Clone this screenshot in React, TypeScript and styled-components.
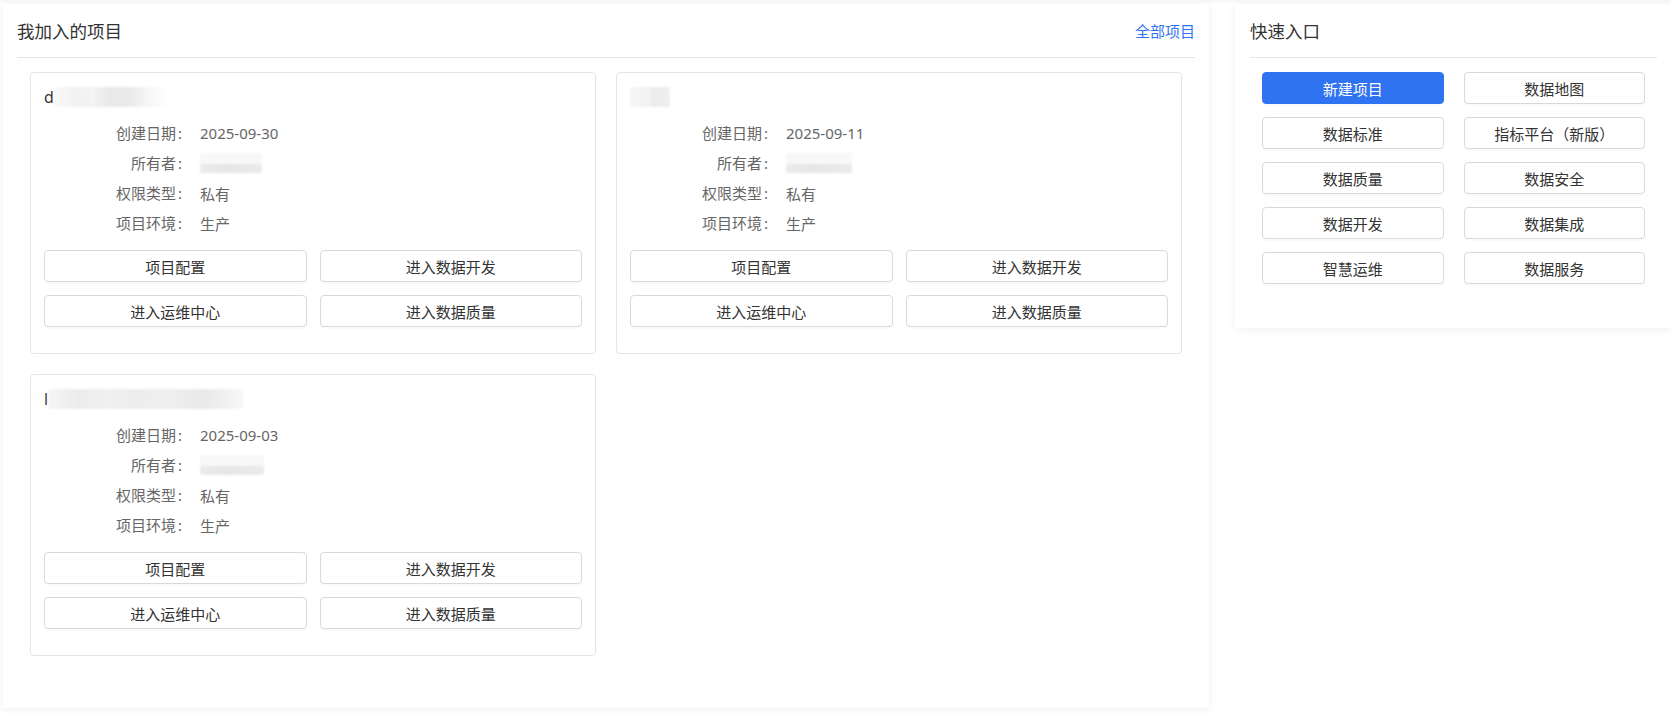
import React from 'react'
import styled, {createGlobalStyle} from 'styled-components'

const GlobalStyle = createGlobalStyle`
  html, body {
    margin: 0;
    padding: 0;
    background: #fff;
  }
  body {
    font-family: "Noto Sans", "Noto Sans CJK SC", sans-serif;
    color: #333;
  }
`

const Page = styled.div`
  display: flex;
  align-items: flex-start;
  gap: 26px;
  padding: 4px 0 0 3px;
  min-height: 716px;
  box-shadow: inset 0 4px 4px -3px rgba(0, 0, 0, 0.06);
`

const Panel = styled.section<{ $w?: number }>`
  background: #fff;
  box-shadow: 0 1px 8px rgba(0, 0, 0, 0.07);
  padding: 0 14px ${p => (p.$w ? '52px' : '44px')} ${p => (p.$w ? '14px' : '15px')};
  ${p => (p.$w ? `width: ${p.$w}px;` : 'flex: 1;')}
  box-sizing: border-box;
`

const Header = styled.div`
  display: flex;
  align-items: center;
  justify-content: space-between;
  height: 53px;
  border-bottom: 1px solid #e6e6e6;
`

const Title = styled.h2`
  margin: 0;
  font-size: 17.5px;
  font-weight: 400;
  color: #333;
`

const MoreLink = styled.a`
  font-size: 15px;
  color: #2f74f0;
  text-decoration: none;
  cursor: pointer;
`

const CardGrid = styled.div`
  display: grid;
  grid-template-columns: 1fr 1fr;
  gap: 20px;
  padding: 14px 13px 0 13px;
  align-items: start;
`

const Card = styled.div`
  border: 1px solid #e5e5e5;
  border-radius: 4px;
  padding: 13px 13px 26px;
`

const Name = styled.div`
  display: flex;
  align-items: center;
  height: 22px;
  font-size: 16px;
  color: #333;
`

const Blur = styled.span<{ $w: number; $h: number; $tones: string }>`
  display: inline-block;
  width: ${p => p.$w}px;
  height: ${p => p.$h}px;
  background: linear-gradient(90deg, ${p => p.$tones});
  filter: blur(1.2px);
`

const OwnerBlur = styled.span<{ $w: number }>`
  display: inline-flex;
  flex-direction: column;
  justify-content: flex-end;
  width: ${p => p.$w}px;
  height: 20px;
  background: #f8f8f8;
  filter: blur(0.8px);

  &::after {
    content: '';
    display: block;
    height: 9px;
    background: linear-gradient(90deg, #ececec, #e6e6e6 40%, #ebebeb);
  }
`

const Info = styled.dl`
  display: grid;
  grid-template-columns: 138px 1fr;
  column-gap: 18px;
  margin: 10px 0 0;
  font-size: 15px;
`

const Label = styled.dt`
  height: 30px;
  line-height: 30px;
  text-align: right;
  color: #666;

  &::after {
    content: ':';
    margin-left: 2px;
  }
`

const Value = styled.dd`
  display: flex;
  align-items: center;
  height: 30px;
  margin: 0;
  color: #666;
`

const ButtonGrid = styled.div<{ $gap: number; $inset?: number }>`
  display: grid;
  grid-template-columns: 1fr 1fr;
  column-gap: ${p => p.$gap}px;
  row-gap: 13px;
  margin: ${p => (p.$inset ? `14px ${p.$inset}px 0` : '12px 0 0')};
`

const Button = styled.button<{ $primary?: boolean }>`
  height: 32px;
  border: 1px solid ${p => (p.$primary ? '#2f73f0' : '#d9d9d9')};
  border-radius: 4px;
  background: ${p => (p.$primary ? '#2f73f0' : '#fff')};
  color: ${p => (p.$primary ? '#fff' : '#333')};
  font-family: inherit;
  font-size: 15px;
  padding: 0 10px;
  box-shadow: 0 2px 0 rgba(0, 0, 0, 0.02);
  cursor: pointer;
`

type Project = {
  prefix: string
  nameBlur: [number, string]
  created: string
  ownerW: number
}

const projects: Project[] = [
  {prefix: 'd', nameBlur: [110, '#fafafa, #f1f1f1 20%, #f4f4f4 35%, #e9e9e9 50%, #eaeaea 70%, #f6f6f6 85%, #fdfdfd'], created: '2025-09-30', ownerW: 62},
  {prefix: '', nameBlur: [40, '#f5f5f5, #f3f3f3 45%, #ececec 55%, #efefef'], created: '2025-09-11', ownerW: 66},
  {prefix: 'l', nameBlur: [195, '#f6f6f6, #ececec 15%, #f0f0f0 30%, #ededed 45%, #efefef 60%, #e9e9e9 80%, #f8f8f8'], created: '2025-09-03', ownerW: 64},
]

const cardActions = ['项目配置', '进入数据开发', '进入运维中心', '进入数据质量']

const quickLinks = ['新建项目', '数据地图', '数据标准', '指标平台（新版）', '数据质量', '数据安全', '数据开发', '数据集成', '智慧运维', '数据服务']

const ProjectCard = ({p}: { p: Project }) => (
  <Card>
    <Name>
      {p.prefix}
      <Blur $w={p.nameBlur[0]} $h={20} $tones={p.nameBlur[1]}/>
    </Name>
    <Info>
      <Label>创建日期</Label>
      <Value>{p.created}</Value>
      <Label>所有者</Label>
      <Value><OwnerBlur $w={p.ownerW}/></Value>
      <Label>权限类型</Label>
      <Value>私有</Value>
      <Label>项目环境</Label>
      <Value>生产</Value>
    </Info>
    <ButtonGrid $gap={13}>
      {cardActions.map(a => <Button key={a}>{a}</Button>)}
    </ButtonGrid>
  </Card>
)

export default function App() {
  return <>
    <GlobalStyle/>
    <Page>
      <Panel $w={1206}>
        <Header>
          <Title>我加入的项目</Title>
          <MoreLink>全部项目</MoreLink>
        </Header>
        <CardGrid>
          {projects.map(p => <ProjectCard key={p.created} p={p}/>)}
        </CardGrid>
      </Panel>
      <Panel>
        <Header>
          <Title>快速入口</Title>
        </Header>
        <ButtonGrid $gap={20} $inset={12}>
          {quickLinks.map((q, i) => <Button key={q} $primary={i === 0}>{q}</Button>)}
        </ButtonGrid>
      </Panel>
    </Page>
  </>
}
